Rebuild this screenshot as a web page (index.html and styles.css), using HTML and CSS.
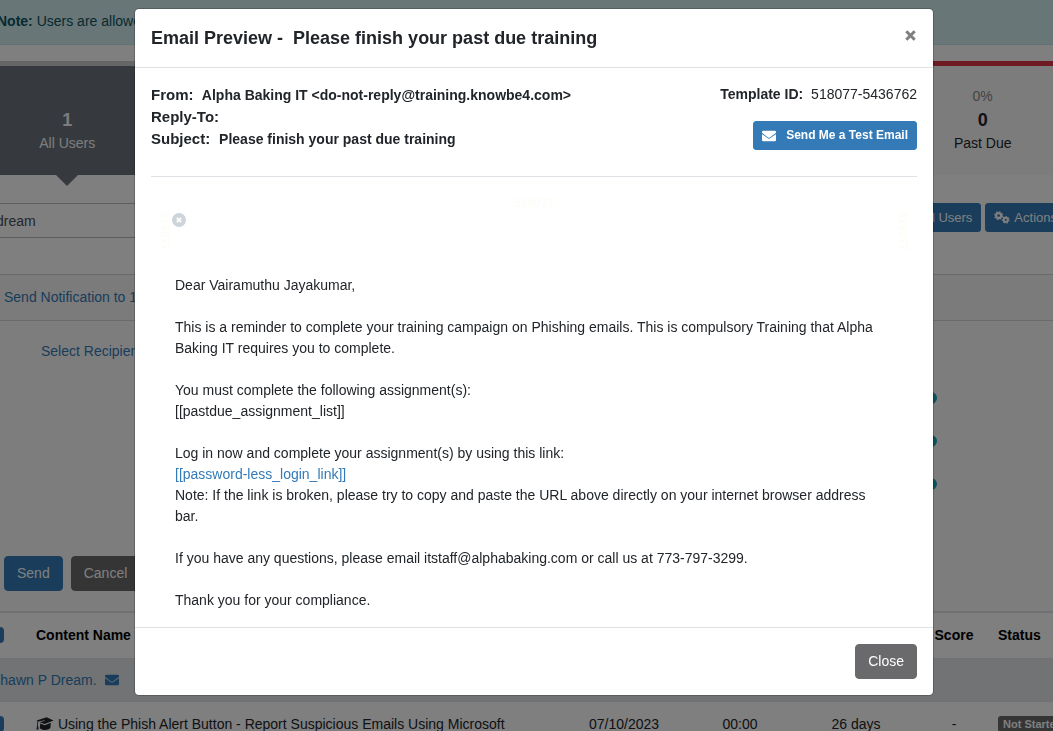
FILE: index.html
```
<!DOCTYPE html>
<html lang="en">
<head>
    <meta charset="UTF-8">
    <meta name="viewport" content="width=device-width, initial-scale=1.0">
    <title>Email Preview</title>
    <link rel="stylesheet" href="styles.css">
</head>
<body>
    <svg class="sprite" aria-hidden="true">
        <symbol id="envelope" viewBox="0 0 512 512">
            <path fill="currentColor" d="M502 191c4-3 10 0 10 5v204a48 48 0 0 1-48 48H48a48 48 0 0 1-48-48V196c0-5 6-8 10-5 22 17 52 40 154 114 21 15 57 48 92 48 36 0 72-33 92-48 102-74 132-97 154-114zM256 320c23 0 57-29 73-41 133-97 143-105 174-129 6-4 9-11 9-19v-19a48 48 0 0 0-48-48H48a48 48 0 0 0-48 48v19c0 8 3 14 9 19 31 24 41 32 174 129 16 12 50 41 73 41z"/>
        </symbol>
    </svg>

    <main class="page">
        <div class="alert"><strong>Note:</strong> Users are allowed</div>

        <div class="tiles">
            <div class="tile active">
                <span class="percent"></span>
                <strong>1</strong>
                <span>All Users</span>
            </div>
            <div class="tile past-due">
                <span class="percent">0%</span>
                <strong>0</strong>
                <span>Past Due</span>
            </div>
        </div>

        <div class="toolbar">
            <input type="text" class="search" value="dream" aria-label="Search users">
            <div class="toolbar-buttons">
                <button type="button" class="btn btn-primary btn-sm">All Users</button>
                <button type="button" class="btn btn-primary btn-sm">
                    <svg class="gears" width="16" height="13" viewBox="0 0 16 13" fill="none" stroke="currentColor">
                        <circle cx="4.6" cy="4.6" r="2.5" stroke-width="2.2"/>
                        <circle cx="4.6" cy="4.6" r="3.9" stroke-width="1.2" stroke-dasharray="1.6 1.46"/>
                        <circle cx="11.8" cy="8.8" r="2.1" stroke-width="2"/>
                        <circle cx="11.8" cy="8.8" r="3.3" stroke-width="1.1" stroke-dasharray="1.5 1.46"/>
                    </svg>
                    Actions
                </button>
            </div>
        </div>

        <div class="notify-header"><a href="#">Send Notification to 1 User</a></div>
        <div class="notify-form">
            <a href="#" class="recipients">Select Recipients</a>
            <div class="help-row"><i class="help"></i></div>
            <div class="help-row"><i class="help"></i></div>
            <div class="help-row"><i class="help"></i></div>
            <div class="form-buttons">
                <button type="button" class="btn btn-primary">Send</button>
                <button type="button" class="btn btn-secondary">Cancel</button>
            </div>
        </div>

        <table class="users">
            <colgroup>
                <col class="col-check">
                <col>
                <col class="col-info">
                <col class="col-info">
                <col class="col-info">
                <col class="col-score">
                <col class="col-status">
            </colgroup>
            <thead>
                <tr>
                    <th><input type="checkbox" class="check" checked aria-label="Select all"></th>
                    <th class="name">Content Name</th>
                    <th></th>
                    <th></th>
                    <th></th>
                    <th>Score</th>
                    <th class="status">Status</th>
                </tr>
            </thead>
            <tbody>
                <tr class="user-row">
                    <td colspan="7"><a href="#">Shawn P Dream. <svg class="mail" width="14" height="14"><use href="#envelope"/></svg></a></td>
                </tr>
                <tr class="training-row">
                    <td><input type="checkbox" class="check" checked aria-label="Select training"></td>
                    <td class="name">
                        <svg class="cap" width="18" height="14" viewBox="0 0 18 14" fill="currentColor">
                            <path d="M0.6 3.6 10.6 0.2 17.6 3.4 8.6 7 3.6 5.2 8.8 3.8 8.6 3.2 2.6 4.6C1.8 5.6 1.9 7 2 8.2L2.6 12.6H0.4L1.2 8.2C0.9 6.8 1.1 5.6 1.6 4.4Z"/>
                            <path d="M4.2 6.4 8.7 8.2 14.8 5.8 14.4 11C11.6 13.6 6.8 13.6 3.8 11.2Z"/>
                        </svg>
                        Using the Phish Alert Button - Report Suspicious Emails Using Microsoft
                    </td>
                    <td>07/10/2023</td>
                    <td>00:00</td>
                    <td>26 days</td>
                    <td>-</td>
                    <td class="status"><span class="badge">Not Started</span></td>
                </tr>
            </tbody>
        </table>
    </main>

    <div class="backdrop">
        <div class="modal" role="dialog" aria-labelledby="modalTitle">
            <div class="modal-header">
                <h1 id="modalTitle">Email Preview - &nbsp;Please finish your past due training</h1>
                <button type="button" class="close" aria-label="Close preview">
                    <svg width="11" height="11" viewBox="0 0 11 11" fill="none" stroke="currentColor" stroke-width="3">
                        <path d="M1.3 1.3 9.7 9.7M9.7 1.3 1.3 9.7"/>
                    </svg>
                </button>
            </div>
            <div class="modal-body">
                <div class="summary">
                    <div class="addresses">
                        <p><b>From:</b> Alpha Baking IT &lt;do-not-reply@training.knowbe4.com&gt;</p>
                        <p><b>Reply-To:</b></p>
                        <p><b>Subject:</b> Please finish your past due training</p>
                    </div>
                    <div class="template">
                        <p><strong>Template ID:</strong> 518077-5436762</p>
                        <button type="button" class="btn btn-primary btn-sm test-email">
                            <svg width="14" height="14"><use href="#envelope"/></svg>
                            Send Me a Test Email
                        </button>
                    </div>
                </div>
                <div class="email">
                    <div class="marks">
                        <div class="marks-left">
                            <span class="mark side">518077</span>
                            <svg class="broken" width="14" height="14" viewBox="0 0 14 14">
                                <circle cx="7" cy="7" r="7" fill="#ced4da"/>
                                <path d="M4.8 4.8 9.2 9.2M9.2 4.8 4.8 9.2" stroke="#fff" stroke-width="1.8"/>
                            </svg>
                        </div>
                        <span class="mark">518077</span>
                        <span class="mark side">518077</span>
                    </div>
                    <div class="message">
                        <p>Dear Vairamuthu Jayakumar,</p>
                        <p>This is a reminder to complete your training campaign on Phishing emails. This is compulsory Training that Alpha Baking IT requires you to complete.</p>
                        <p>You must complete the following assignment(s):<br>[[pastdue_assignment_list]]</p>
                        <p>Log in now and complete your assignment(s) by using this link:<br>
                            <a href="#">[[password-less_login_link]]</a><br>
                            Note: If the link is broken, please try to copy and paste the URL above directly on your internet browser address bar.</p>
                        <p>If you have any questions, please email itstaff@alphabaking.com or call us at 773-797-3299.</p>
                        <p>Thank you for your compliance.</p>
                    </div>
                </div>
            </div>
            <div class="modal-footer">
                <button type="button" class="btn btn-secondary">Close</button>
            </div>
        </div>
    </div>
</body>
</html>
```
FILE: styles.css
```
* {
    margin: 0;
    padding: 0;
    box-sizing: border-box;
}
body {
    font-family: "Liberation Sans", Arial, sans-serif;
    font-size: 14px;
    line-height: 21px;
    color: #212529;
    background: #fff;
    height: 100vh;
    overflow: hidden;
}
a {
    color: #337ab7;
    text-decoration: none;
}
a:hover {
    text-decoration: underline;
}
svg {
    flex: none;
}
.sprite {
    display: none;
}

/* Buttons */
.btn {
    font: inherit;
    color: #fff;
    padding: 6px 12px;
    border: 1px solid transparent;
    border-radius: 4px;
    cursor: pointer;
}
.btn-primary {
    background: #337ab7;
    border-color: #337ab7;
}
.btn-secondary {
    background: #6a6a6c;
    border-color: #6a6a6c;
}
.btn-sm {
    display: flex;
    align-items: center;
    gap: 4px;
    font-size: 13px;
    line-height: 19px;
    padding: 4px 8px;
    border-radius: 3px;
}

/* Page behind the modal */
.page {
    margin: 0 -16px;
}
.alert {
    padding: 11px 13px 12px;
    color: #0c5460;
    background: #d1ecf1;
    border-bottom: 1px solid #bee5eb;
}
.tiles {
    display: grid;
    grid-template-columns: repeat(7, 1fr);
    padding: 16px 10px 0 7px;
    background: linear-gradient(#ccc, #ccc) 0 16px / 100% 5px no-repeat;
}
.tile {
    position: relative;
    display: flex;
    flex-direction: column;
    align-items: center;
    border-top: 5px solid #ccc;
    padding: 20px 0 21px;
    background: #f8f8f8;
}
.tile strong {
    font-size: 18px;
    line-height: 26px;
}
.tile .percent {
    height: 21px;
    color: #888;
}
.tile.active {
    background: #6c757d;
    color: #f8f9fa;
}
.tile.active::after {
    content: "";
    position: absolute;
    top: 100%;
    border: 11px solid transparent;
    border-top-color: #6c757d;
    border-bottom: 0;
}
.tile.past-due {
    grid-column: 7;
    border-top-color: #dc3545;
}
.toolbar {
    display: flex;
    justify-content: space-between;
    align-items: flex-start;
    padding: 28px 3px 36px 0;
}
.search {
    font: inherit;
    color: #495057;
    width: 320px;
    height: 35px;
    padding: 0 11px;
    border: 1px solid #bbb;
}
.toolbar-buttons {
    display: flex;
    gap: 4px;
}
.notify-header {
    padding: 12px 20px;
    background: #f7f7f7;
    border: solid #d5d5d5;
    border-width: 1px 0;
}
.notify-form {
    padding: 8px 20px 20px;
    background: #fbfbfb;
}
.recipients {
    display: block;
    padding: 12px 37px 14px;
}
.help-row {
    display: flex;
    justify-content: flex-end;
    align-items: center;
    height: 43px;
    padding-right: 112px;
}
.help {
    width: 12px;
    height: 12px;
    border-radius: 50%;
    background: #17a2b8;
}
.form-buttons {
    display: flex;
    gap: 8px;
    padding-top: 51px;
}

/* Users table */
.users {
    width: 100%;
    table-layout: fixed;
    border-collapse: collapse;
    text-align: center;
    border-top: 2px solid #dee2e6;
}
.col-check { width: 44px; }
.col-info { width: 116px; }
.col-score { width: 80px; }
.col-status { width: 75px; }
.users th {
    height: 46px;
    color: #000;
}
.users td {
    height: 43px;
    border-top: 1px solid #dee2e6;
}
.users .training-row td {
    height: 46px;
}
.users .name {
    text-align: left;
    padding-left: 8px;
}
.users .status {
    text-align: left;
    padding-left: 4px;
}
.users .user-row td {
    background: #e2e6ea;
    text-align: left;
    padding: 1px 7px 0;
}
.mail {
    margin-left: 5px;
    vertical-align: -2px;
}
.cap {
    vertical-align: -2px;
}
.check {
    appearance: none;
    display: block;
    width: 16px;
    height: 16px;
    margin-left: 4px;
    border-radius: 4px;
    background: #337ab7;
}
.badge {
    display: block;
    width: 72px;
    padding: 0 5px;
    font-size: 11px;
    line-height: 16px;
    font-weight: bold;
    color: #fff;
    background: #6a6a6c;
    border-radius: 3px;
}

/* Modal */
.backdrop {
    position: fixed;
    inset: 0;
    display: flex;
    justify-content: center;
    align-items: flex-start;
    padding: 8px 0 0 15px;
    background: rgba(0, 0, 0, 0.5);
}
.modal {
    width: 100%;
    max-width: 800px;
    background: #fff;
    background-clip: padding-box;
    border: 1px solid rgba(0, 0, 0, 0.2);
    border-radius: 5px;
}
.modal-header {
    display: flex;
    justify-content: space-between;
    align-items: center;
    padding: 16px;
    border-bottom: 1px solid #dee2e6;
}
.modal-header h1 {
    font-size: 18px;
    line-height: 26px;
}
.close {
    display: flex;
    padding: 1px;
    margin-bottom: 5px;
    border: none;
    background: none;
    color: #7f7f7f;
    cursor: pointer;
}
.modal-body {
    padding: 16px 16px 0;
}
.summary {
    display: flex;
    justify-content: space-between;
    padding-bottom: 26px;
    border-bottom: 1px solid #dee2e6;
}
.addresses {
    font-weight: bold;
    line-height: 22px;
}
.addresses b {
    font-size: 15px;
    margin-right: 5px;
}
.template {
    display: flex;
    flex-direction: column;
    align-items: flex-end;
    gap: 16px;
}
.template strong {
    margin-right: 4px;
}
.test-email {
    gap: 10px;
    font-size: 12px;
    font-weight: bold;
}
.email {
    padding: 16px 8px;
}
.marks {
    display: grid;
    grid-template-columns: 1fr auto 1fr;
    align-items: start;
    height: 82px;
}
.marks-left {
    display: flex;
    gap: 1px;
}
.mark {
    font-size: 12px;
    line-height: 20px;
    font-weight: bold;
    color: #fdfdf8;
}
.mark.side {
    writing-mode: vertical-rl;
    justify-self: end;
    padding-top: 18px;
    line-height: 12px;
}
.broken {
    margin-top: 20px;
}
.message {
    padding: 0 32px 0 16px;
}
.message p + p {
    margin-top: 21px;
}
.modal-footer {
    display: flex;
    justify-content: flex-end;
    padding: 16px;
    border-top: 1px solid #dee2e6;
}
```
